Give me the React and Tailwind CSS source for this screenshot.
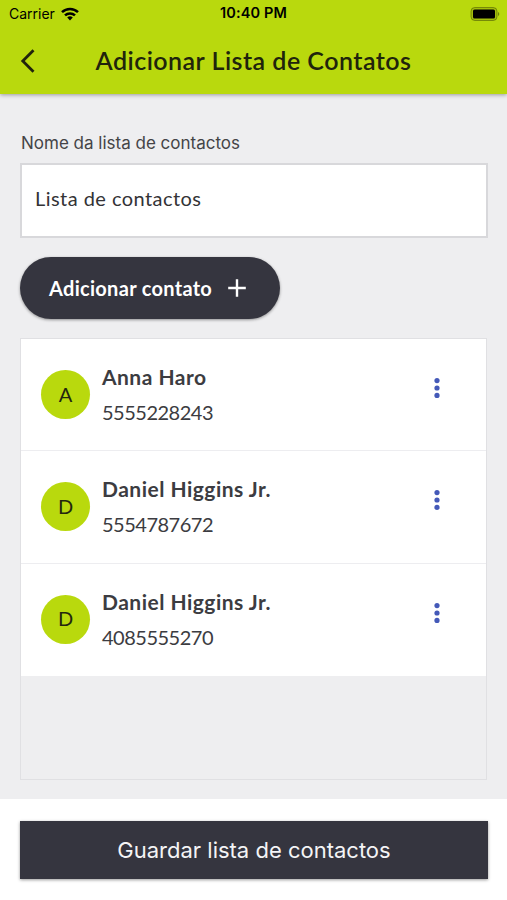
import React, { useState } from "react";

const CONTACTS = [
  { id: 1, name: "Anna Haro", phone: "5555228243" },
  { id: 2, name: "Daniel Higgins Jr.", phone: "5554787672" },
  { id: 3, name: "Daniel Higgins Jr.", phone: "4085555270" },
];

const StatusBar = () => (
  <div className="grid grid-cols-3 items-center h-[27px] px-[9px] text-black font-['Inter',sans-serif] text-[14px] leading-none">
    <div className="flex items-center gap-[6px]">
      <span>Carrier</span>
      <svg width="18" height="14" viewBox="0 0 18 14" fill="none" stroke="black" strokeWidth="2.5">
        <path d="M1 5.2a11.5 11.5 0 0 1 16 0" />
        <path d="M4 8.4a7.2 7.2 0 0 1 10 0" />
        <path d="M9 13.6l-2.8-3a4 4 0 0 1 5.6 0z" fill="black" stroke="none" />
      </svg>
    </div>
    <span className="text-center text-[14.5px] font-semibold tracking-[0.15px] whitespace-nowrap">10:40 PM</span>
    <div className="flex justify-end">
      <svg className="-mr-[2px]" width="30" height="14" viewBox="0 0 30 14">
        <rect x="1" y="0.5" width="26" height="13" rx="3.8" fill="black" fillOpacity="0.12" stroke="black" strokeOpacity="0.32" />
        <rect x="3" y="2.5" width="22" height="9" rx="1.6" fill="black" />
        <path d="M28 5v4a2.2 2.2 0 0 0 0-4z" fill="black" fillOpacity="0.4" />
      </svg>
    </div>
  </div>
);

const ContactRow = ({ contact }) => (
  <li className="flex h-[112.3px] pl-5 pr-[45px] bg-white border-b border-[#ededf0] last:border-b-0">
    <div className="flex items-center justify-center w-[49px] h-[49px] mt-[31px] pb-[2px] rounded-full bg-[#b9d90d] text-[#24270f] text-[20px]">
      {contact.name[0]}
    </div>
    <div className="flex-1 ml-3 mt-[26px] text-[#3c3c41] leading-[24px]">
      <p className="text-[21px] font-bold tracking-[0.48px]">{contact.name}</p>
      <p className="mt-[11px] text-[20px] tracking-[-0.5px]">{contact.phone}</p>
    </div>
    <button className="self-start mt-[38px]" aria-label="Opções">
      <svg width="8" height="22" viewBox="0 0 8 22" fill="#4459b8">
        <circle cx="4" cy="3.6" r="2.6" />
        <circle cx="4" cy="11" r="2.6" />
        <circle cx="4" cy="18.4" r="2.6" />
      </svg>
    </button>
  </li>
);

const App = () => {
  const [listName, setListName] = useState("Lista de contactos");

  return (
    <div className="flex flex-col w-full h-screen overflow-hidden bg-[#eeeef0] font-['Lato',sans-serif]">
      <header className="shrink-0 h-[94px] bg-[#b9d90d] shadow-[0_1px_4px_rgba(0,0,0,0.35)]">
        <StatusBar />
        <div className="grid grid-cols-[40px_1fr_40px] items-center h-[67px] pl-5 pr-5">
          <button aria-label="Voltar">
            <svg width="16" height="24" viewBox="0 0 16 24" fill="none" stroke="#20240c" strokeWidth="2.8">
              <path d="M13.5 1.3L2.8 12l10.7 10.7" />
            </svg>
          </button>
          <h1 className="text-center text-[25px] font-semibold tracking-[0.48px] text-[#20240c] whitespace-nowrap">
            Adicionar Lista de Contatos
          </h1>
        </div>
      </header>

      <main className="flex flex-col flex-1 min-h-0 px-5 pb-[19px]">
        <label htmlFor="list-name" className="mt-[37px] ml-px h-6 font-['Inter',sans-serif] text-[17px] leading-6 text-[#444447]">
          Nome da lista de contactos
        </label>
        <input
          id="list-name"
          className="w-[468px] h-[75px] mt-2 px-[13px] pb-[5px] bg-white border-2 border-[#d8d8db] text-[20px] tracking-[0.45px] text-[#333336] outline-none"
          value={listName}
          onChange={(e) => setListName(e.target.value)}
        />

        <button className="flex items-center shrink-0 w-[260px] h-[62px] mt-[19px] pl-[29px] rounded-full bg-[#35353f] text-white text-[20px] font-bold tracking-[0.3px] shadow-[0_1px_3px_rgba(0,0,0,0.4)]">
          <span className="w-[164px] pb-px text-left whitespace-nowrap">Adicionar contato</span>
          <svg className="ml-[14px]" width="20" height="20" viewBox="0 0 20 20" stroke="white" strokeWidth="2.4">
            <path d="M10 1.2v17.6M1.2 10h17.6" />
          </svg>
        </button>

        <ul className="flex-1 w-[467px] mt-[19px] border border-[#e0e0e3]">
          {CONTACTS.map((contact) => (
            <ContactRow key={contact.id} contact={contact} />
          ))}
        </ul>
      </main>

      <footer className="shrink-0 h-[101px] pl-5 pt-[22px] bg-white">
        <button className="w-[468px] h-[58px] bg-[#35353f] text-[#f4f4f6] font-['Inter',sans-serif] text-[22px] shadow-[0_1px_3px_rgba(0,0,0,0.4)]">
          Guardar lista de contactos
        </button>
      </footer>
    </div>
  );
};

export default App;
